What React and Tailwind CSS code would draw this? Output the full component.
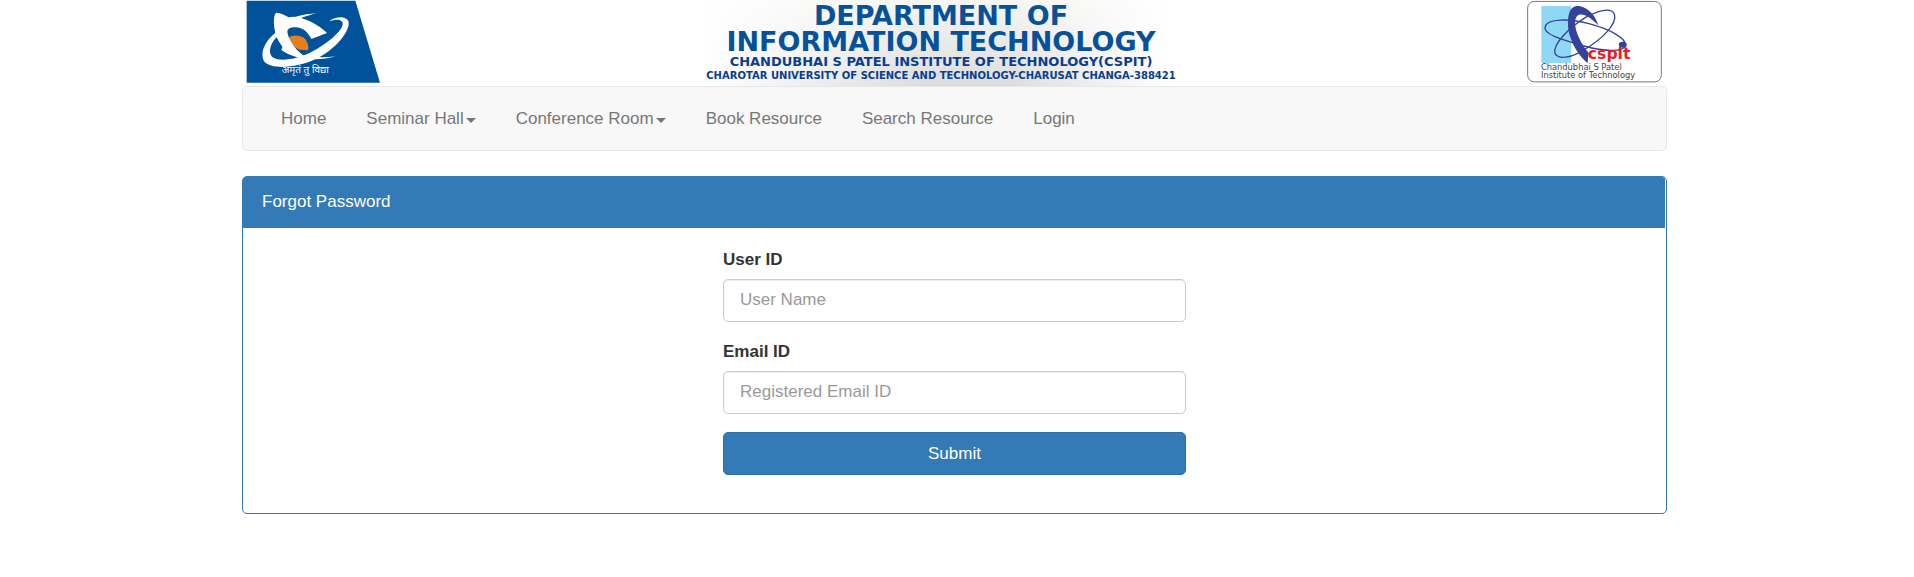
const navItems = [
  { label: 'Home' },
  { label: 'Seminar Hall', menu: true },
  { label: 'Conference Room', menu: true },
  { label: 'Book Resource' },
  { label: 'Search Resource' },
  { label: 'Login' },
];

function UniversityLogo() {
  return (
    <svg viewBox="30 0 405 249" className="h-[83px] w-[135px]" role="img" aria-label="Charusat">
      <path d="M32 2H358L432 248H32Z" fill="#00529b" />
      <path d="M158 113C170 104 196 104 208 118C217 130 219 142 216 151L190 149C175 142 164 130 158 113Z" fill="#e87d1e" />
      <path d="M121 38C134 38 146 46 158 52C172 48 190 50 206 58C234 68 258 84 273 99L226 117C216 97 202 84 182 82C166 81 156 84 154 94C154 116 182 158 219 178C176 176 138 150 122 112C112 84 110 44 121 38Z" fill="#fff" />
      <path d="M280 64C296 50 328 46 337 63C346 88 301 149 237 178C187 202 107 212 84 184C70 154 92 118 121 97L126 107C106 125 94 153 108 170C128 188 185 178 232 153C284 124 328 84 319 66C312 56 296 59 280 64Z" fill="#fff" />
      <path d="M140 138C176 166 240 178 299 169C250 184 180 182 136 150Z" fill="#fff" />
      <path d="M134 70C160 54 200 42 242 40C206 48 172 62 150 82Z" fill="#fff" />
      <text x="208" y="220" textAnchor="middle" fontSize="30" fontFamily="'Noto Sans Devanagari', 'Noto Sans', sans-serif" fill="#fff">अमृतं तु विद्या</text>
    </svg>
  );
}

function InstituteLogo() {
  return (
    <svg viewBox="50 0 406 249" className="h-[83px] w-[135px]" role="img" aria-label="CSPIT">
      <rect x="52" y="4" width="402" height="242" rx="20" fill="#fff" stroke="#777" strokeWidth="3" />
      <rect x="93" y="18" width="90" height="171" fill="#8fd8f5" />
      <g fill="none" stroke="#34429a" strokeWidth="4">
        <path d="M105 79C112 56 173 54 236 71C300 88 350 115 346 137C341 157 282 155 222 138C158 120 95 103 105 79Z" />
        <path d="M313 43C322 72 274 120 217 152C181 175 143 179 134 160C127 132 177 83 226 52C269 28 306 22 313 43Z" />
      </g>
      <path d="M173 67C174 27 188 15 207 18C236 24 257 48 264 76C241 51 214 35 201 48C184 67 203 120 235 158L232 190C196 157 172 110 173 67Z" fill="#34429a" />
      <ellipse cx="338" cy="134" rx="12" ry="9" fill="#34429a" />
      <text x="233" y="178" fontSize="47" fontWeight="700" fontFamily="'DejaVu Sans', sans-serif" fill="#ed1c24">cspit</text>
      <g fontSize="25" fontFamily="'DejaVu Sans', sans-serif" fill="#444">
        <text x="92" y="210">Chandubhai S Patel</text>
        <text x="92" y="234">Institute of Technology</text>
      </g>
    </svg>
  );
}

function Banner() {
  return (
    <header className="flex h-[86px] items-start justify-between pr-[5px] pl-1">
      <UniversityLogo />
      <h1 className="mr-[26px] flex h-full w-[480px] flex-col items-center bg-[linear-gradient(to_right,#fff_0%,transparent_45%,transparent_65%,#fff_98%),linear-gradient(to_bottom,#f6f6f4,#dcdedd)] pt-[3px] text-center font-['DejaVu_Sans',sans-serif] font-bold whitespace-nowrap text-[#07509a]">
        <span className="text-[27px] leading-[26px]">DEPARTMENT OF</span>
        <span className="text-[27px] leading-[26px]">INFORMATION TECHNOLOGY</span>
        <span className="text-[13px] leading-[14px] text-[#0a3d8f]">CHANDUBHAI S PATEL INSTITUTE OF TECHNOLOGY(CSPIT)</span>
        <span className="text-[10px] leading-[14px] text-[#0a3d8f]">CHAROTAR UNIVERSITY OF SCIENCE AND TECHNOLOGY-CHARUSAT CHANGA-388421</span>
      </h1>
      <InstituteLogo />
    </header>
  );
}

function NavBar() {
  return (
    <nav className="rounded-[5px] border border-[#e7e7e7] bg-[#f8f8f8] px-[38px] pt-5 pb-[19px]">
      <ul className="flex flex-wrap gap-x-10 leading-6 text-[#777]">
        {navItems.map(({ label, menu }) => (
          <li key={label}>
            <a href="#" className="flex items-center gap-[2px]">
              {label}
              {menu && <span className="mt-[2px] border-x-5 border-t-5 border-x-transparent border-t-[#777]" />}
            </a>
          </li>
        ))}
      </ul>
    </nav>
  );
}

function Field({ id, label, type, placeholder }) {
  return (
    <div className="mb-[18px]">
      <label htmlFor={id} className="mb-[7px] block leading-6 font-bold">{label}</label>
      <input
        id={id}
        type={type}
        placeholder={placeholder}
        className="block h-[43px] w-full rounded-[5px] border border-[#ccc] bg-white px-4 pb-[2px] shadow-[inset_0_1px_1px_rgba(0,0,0,0.075)] placeholder:text-[#999]"
      />
    </div>
  );
}

export default function App() {
  return (
    <div className="pr-[5px] font-['Liberation_Sans',Arial,sans-serif] text-[17px] text-[#333]">
      <div className="mx-auto max-w-[1425px]">
        <Banner />
        <NavBar />
        <main className="mt-[25px] rounded-[5px] border border-[#337ab7] bg-white">
          <h2 className="mr-px rounded-t-[3px] bg-[#337ab7] px-[19px] pt-[13px] pb-[14px] leading-6 text-white">Forgot Password</h2>
          <form className="mx-auto max-w-[463px] pt-5 pb-[38px]" onSubmit={(e) => e.preventDefault()}>
            <Field id="user-id" label="User ID" type="text" placeholder="User Name" />
            <Field id="email-id" label="Email ID" type="email" placeholder="Registered Email ID" />
            <button type="submit" className="block h-[43px] w-full rounded-[5px] border border-[#2e6da4] bg-[#337ab7] text-white">Submit</button>
          </form>
        </main>
      </div>
    </div>
  );
}
